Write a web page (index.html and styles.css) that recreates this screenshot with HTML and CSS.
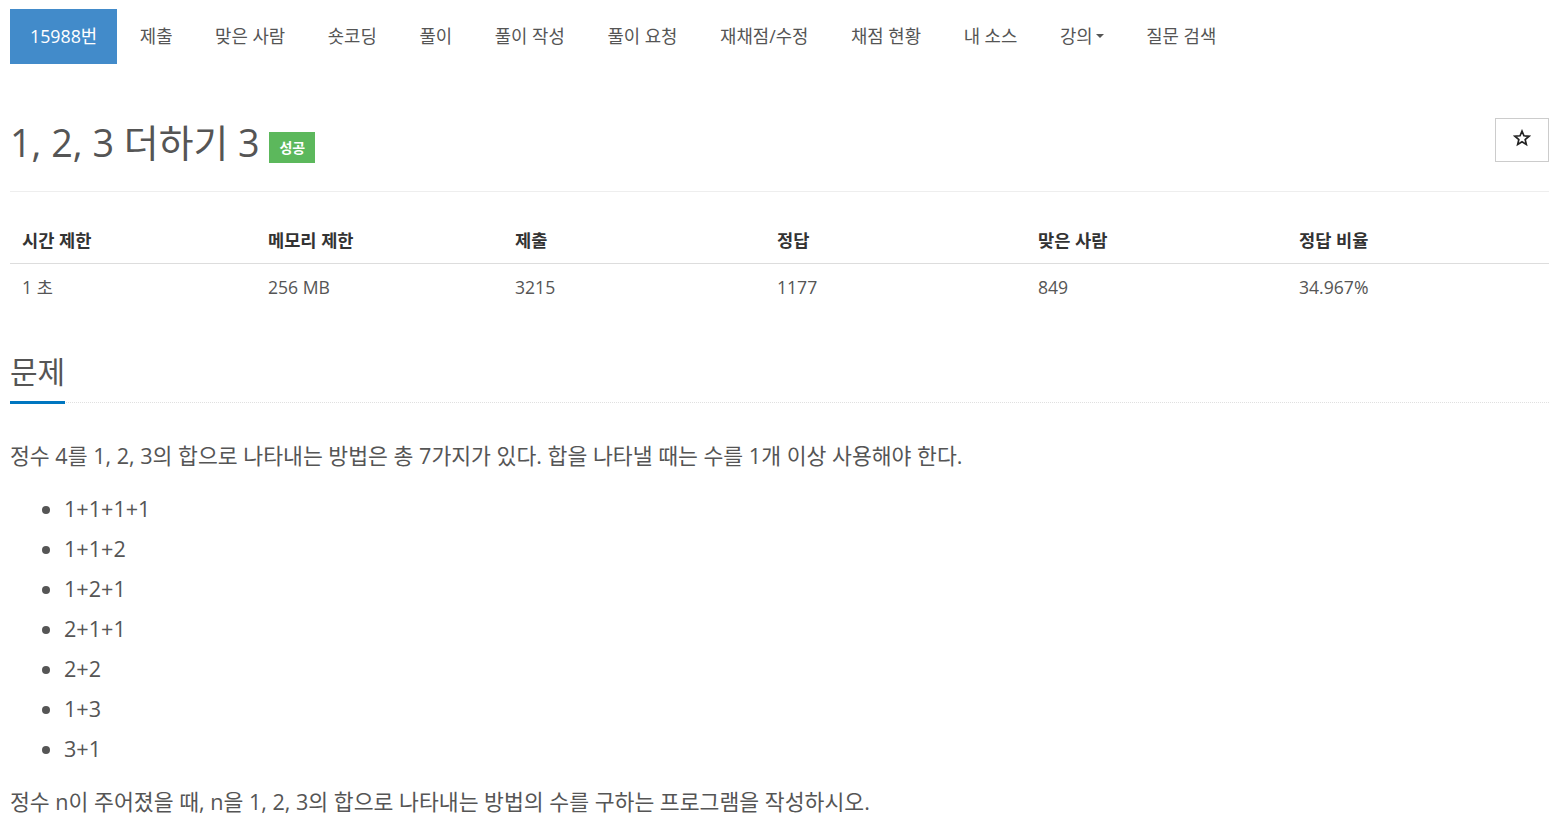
FILE: index.html
```html
<!DOCTYPE html>
<html lang="ko">
<head>
<meta charset="utf-8">
<title>1, 2, 3 더하기 3</title>
<link rel="stylesheet" href="styles.css">
</head>
<body>
<div class="page">
  <ul class="nav">
    <li class="active"><a>15988번</a></li>
    <li><a>제출</a></li>
    <li><a>맞은 사람</a></li>
    <li><a>숏코딩</a></li>
    <li><a>풀이</a></li>
    <li><a>풀이 작성</a></li>
    <li><a>풀이 요청</a></li>
    <li><a>재채점/수정</a></li>
    <li><a>채점 현황</a></li>
    <li><a>내 소스</a></li>
    <li><a>강의<span class="caret"></span></a></li>
    <li><a>질문 검색</a></li>
  </ul>

  <div class="title-row">
    <h1 class="title">1, 2, 3 더하기 3 <span class="label">성공</span></h1>
    <button class="star" aria-label="즐겨찾기">
      <svg width="18" height="18" viewBox="0 0 24 24"><path d="M12 2.8l2.6 6.3 6.8.5-5.2 4.4 1.6 6.6L12 17l-5.8 3.6 1.6-6.6-5.2-4.4 6.8-.5z" fill="none" stroke="#222" stroke-width="2.2" stroke-linejoin="miter"/></svg>
    </button>
  </div>

  <table class="info">
    <thead>
      <tr>
        <th class="c1">시간 제한</th>
        <th class="c2">메모리 제한</th>
        <th class="c3">제출</th>
        <th class="c4">정답</th>
        <th class="c5">맞은 사람</th>
        <th>정답 비율</th>
      </tr>
    </thead>
    <tbody>
      <tr>
        <td>1 초</td>
        <td>256 MB</td>
        <td>3215</td>
        <td>1177</td>
        <td>849</td>
        <td>34.967%</td>
      </tr>
    </tbody>
  </table>

  <section class="problem">
    <div class="headline"><h2>문제</h2></div>
    <div class="text">
      <p>정수 4를 1, 2, 3의 합으로 나타내는 방법은 총 7가지가 있다. 합을 나타낼 때는 수를 1개 이상 사용해야 한다.</p>
      <ul>
        <li>1+1+1+1</li>
        <li>1+1+2</li>
        <li>1+2+1</li>
        <li>2+1+1</li>
        <li>2+2</li>
        <li>1+3</li>
        <li>3+1</li>
      </ul>
      <p>정수 n이 주어졌을 때, n을 1, 2, 3의 합으로 나타내는 방법의 수를 구하는 프로그램을 작성하시오.</p>
    </div>
  </section>
</div>
</body>
</html>
```
FILE: styles.css
```css
* { box-sizing: border-box; }
html, body { margin: 0; padding: 0; background: #fff; }
body {
  font-family: "Open Sans", "Noto Sans CJK KR", sans-serif;
  color: #555;
  font-size: 16px;
}
.page { padding: 9px 13px 0 10px; }

.nav {
  list-style: none;
  margin: 0;
  padding: 0;
  display: flex;
  gap: 2.6px;
  height: 55px;
}
.nav li a {
  display: flex;
  align-items: center;
  height: 55px;
  padding: 0 20px 3px;
  color: #555;
  font-size: 17.8px;
}
.nav li.active a { background: #428bca; color: #fff; }
.caret {
  display: inline-block;
  width: 0; height: 0;
  margin-left: 3px;
  margin-top: 2px;
  border-top: 4px solid #555;
  border-left: 4px solid transparent;
  border-right: 4px solid transparent;
}

.title-row {
  display: flex;
  justify-content: space-between;
  align-items: flex-start;
  margin-top: 54px;
  padding-bottom: 23px;
  border-bottom: 1px solid #eee;
}
.title {
  margin: 0;
  font-size: 37.8px;
  font-weight: 400;
  line-height: 50px;
  color: #555;
}
.label {
  display: inline-block;
  vertical-align: 4px;
  background: #5cb85c;
  color: #fff;
  font-size: 14px;
  font-weight: 700;
  line-height: 31px;
  height: 31px;
  padding: 0 10px;
}
.star {
  width: 54px;
  height: 44px;
  margin-top: 0;
  background: #fff;
  border: 1px solid #ccc;
  padding: 0;
  display: flex;
  align-items: center;
  justify-content: center;
}
.star svg { display: block; margin-top: -5px; }

.info {
  width: 100%;
  border-collapse: collapse;
  margin-top: 25px;
  font-size: 17.6px;
}
.info th, .info td {
  text-align: left;
  padding: 0 12px;
  height: 46px;
}
.info th { font-weight: 700; color: #333; border-bottom: 1px solid #ddd; padding-bottom: 1px; }
.info td { color: #555; padding-top: 1px; }
.info .c1 { width: 246px; }
.info .c2 { width: 247px; }
.info .c3 { width: 262px; }
.info .c4 { width: 261px; }
.info .c5 { width: 261px; }

.problem { margin-top: 41px; }
.headline {
  border-bottom: 1px dotted #e0e0e0;
}
.headline h2 {
  display: inline-block;
  margin: 0 0 -2px;
  font-size: 30px;
  font-weight: 400;
  line-height: 44px;
  padding-bottom: 7px;
  color: #555;
  border-bottom: 3px solid #0076c0;
}
.text { font-size: 21.6px; color: #555; }
.text p { margin: 36px 0 0; line-height: 34px; }
.text ul { margin: 19px 0 19px; padding-left: 54px; }
.text li { line-height: 34px; margin-bottom: 6px; }
.text ul + p { margin-top: 0; }
```
